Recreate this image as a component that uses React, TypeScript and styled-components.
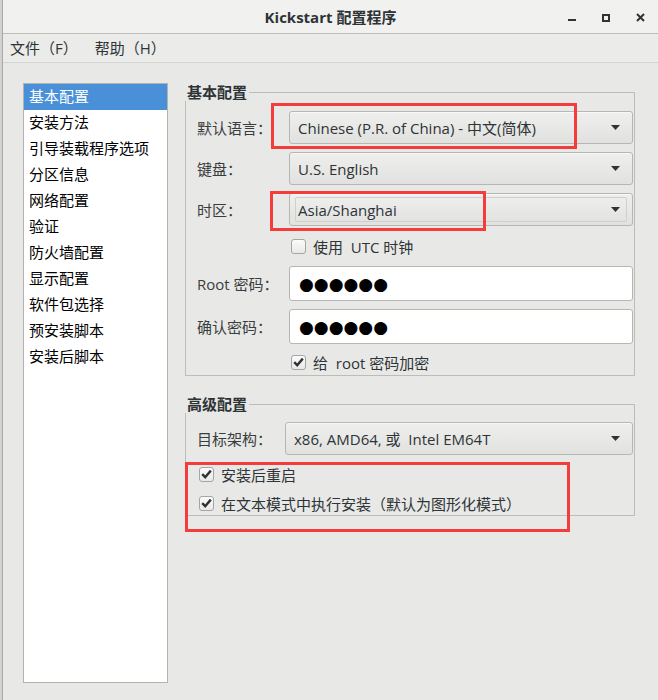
import React from "react";
import styled, { createGlobalStyle } from "styled-components";

const Global = createGlobalStyle`
  html, body { margin: 0; padding: 0; background: #e8e8e7; }
  body {
    font-family: "Open Sans", "Noto Sans CJK SC", sans-serif;
    font-size: 15px;
    color: #2e3436;
  }
  * { box-sizing: border-box; }
`;

const Window = styled.div`
  position: relative;
  width: 658px;
  height: 700px;
  display: flex;
  overflow: hidden;
  background: #e8e8e7;
`;

const Edge = styled.div`
  width: 3px;
  flex: none;
  background: #d2d2d0;
  border-right: 1px solid #a9a9a6;
`;

const Main = styled.div`
  flex: 1;
  display: flex;
  flex-direction: column;
  min-width: 0;
`;

const TitleBar = styled.div`
  height: 34px;
  flex: none;
  display: grid;
  grid-template-columns: 1fr auto 1fr;
  align-items: center;
  background: #f1f1f0;
  border-bottom: 1px solid #bdbdba;
`;

const Title = styled.div`
  grid-column: 2;
  font-weight: 700;
  font-size: 15px;
  color: #2e3436;
  line-height: 20px;
`;

const Controls = styled.div`
  grid-column: 3;
  justify-self: end;
  display: flex;
  align-items: center;
  gap: 26px;
  padding-right: 13px;
  padding-top: 2px;
`;

const MenuBar = styled.div`
  height: 29px;
  flex: none;
  display: flex;
  align-items: center;
  gap: 17px;
  padding-left: 7px;
  background: #ebebea;
  border-bottom: 1px solid #d5d5d3;
`;

const MenuItem = styled.span`
  font-size: 15px;
  line-height: 20px;
  color: #2e3436;
`;

const Content = styled.div`
  flex: 1;
  display: flex;
  align-items: flex-start;
  padding: 20px 0 0 20px;
`;

const NavList = styled.ul`
  list-style: none;
  margin: 0;
  padding: 0;
  width: 145px;
  height: 600px;
  flex: none;
  background: #ffffff;
  border: 1px solid #b3b3b0;
`;

const NavItem = styled.li<{ $active?: boolean }>`
  height: 26px;
  line-height: 25px;
  padding-left: 5px;
  font-size: 15px;
  color: ${(p) => (p.$active ? "#ffffff" : "#000000")};
  background: ${(p) => (p.$active ? "#4a90d9" : "transparent")};
  white-space: nowrap;
`;

const RightColumn = styled.div`
  margin-left: 17px;
  width: 450px;
  display: flex;
  flex-direction: column;
  gap: 19px;
`;

const Frame = styled.fieldset`
  margin: 0;
  padding: 0;
  border: 1px solid #bcbcb9;
  min-width: 0;
`;

const Legend = styled.legend`
  padding: 0 2px 0 2px;
  margin-left: -1px;
  font-weight: 700;
  font-size: 15px;
  line-height: 18px;
  color: #2e3436;
`;

const FormGrid = styled.div<{ $label: number; $gap: number; $top: number; $bottom: number }>`
  display: grid;
  grid-template-columns: ${(p) => p.$label}px 1fr;
  row-gap: ${(p) => p.$gap}px;
  align-items: center;
  padding: ${(p) => p.$top}px 1px ${(p) => p.$bottom}px 11px;
`;

const Label = styled.span`
  font-size: 15px;
  line-height: 20px;
  color: #3a3d3e;
  white-space: nowrap;
`;

const Combo = styled.div`
  height: 33px;
  display: flex;
  align-items: center;
  border: 1px solid #b6b6b3;
  border-radius: 3px;
  background: linear-gradient(#efefee, #e1e1df);
  box-shadow: inset 0 1px #f8f8f8;
  padding: 0 12px 0 8px;
  color: #2e3436;
`;

const ComboText = styled.span`
  flex: 1;
  font-size: 15px;
  line-height: 20px;
  white-space: nowrap;
`;

const FocusBox = styled.div`
  flex: 1;
  align-self: stretch;
  margin: 3px -7px 3px -3px;
  padding: 0 6px 0 2px;
  display: flex;
  align-items: center;
  border: 1px solid #cfcfcc;
  border-radius: 2px;
`;

const Arrow = () => (
  <svg width="9" height="5" viewBox="0 0 9 5">
    <path d="M0 0 H9 L4.5 5 Z" fill="#2e3436" />
  </svg>
);

const Entry = styled.div`
  height: 35px;
  display: flex;
  align-items: center;
  background: #ffffff;
  border: 1px solid #b6b6b3;
  border-radius: 3px;
  padding-left: 9px;
`;

const Dots = styled.span`
  font-family: "DejaVu Sans", sans-serif;
  font-size: 17px;
  line-height: 20px;
  color: #000000;
`;

const CheckRow = styled.label<{ $span?: boolean; $h?: number }>`
  grid-column: ${(p) => (p.$span ? "1 / span 2" : "2")};
  height: ${(p) => p.$h ?? 20}px;
  display: flex;
  align-items: center;
  gap: 7px;
  padding-left: 2px;
  font-size: 15px;
  color: #2e3436;
  white-space: nowrap;
`;

const Box = styled.span`
  width: 15px;
  height: 15px;
  flex: none;
  display: inline-flex;
  align-items: center;
  justify-content: center;
  border: 1px solid #a5a5a2;
  border-radius: 3px;
  background: linear-gradient(#fbfbfb, #e9e9e8);
`;

const Check = ({ checked }: { checked?: boolean }) => (
  <Box>
    {checked && (
      <svg width="11" height="10" viewBox="0 0 11 10">
        <path d="M1.2 5.2 L4.2 8.2 L9.8 1.6" fill="none" stroke="#2e3436" strokeWidth="2.4" />
      </svg>
    )}
  </Box>
);

const Mark = styled.div<{ $x: number; $y: number; $w: number; $h: number }>`
  position: absolute;
  left: ${(p) => p.$x}px;
  top: ${(p) => p.$y}px;
  width: ${(p) => p.$w}px;
  height: ${(p) => p.$h}px;
  border: 3px solid #f43c3c;
  pointer-events: none;
`;

const nav = [
  "基本配置",
  "安装方法",
  "引导装载程序选项",
  "分区信息",
  "网络配置",
  "验证",
  "防火墙配置",
  "显示配置",
  "软件包选择",
  "预安装脚本",
  "安装后脚本",
];

export default function App() {
  return (
    <>
      <Global />
      <Window>
        <Edge />
        <Main>
          <TitleBar>
            <Title>Kickstart 配置程序</Title>
            <Controls>
              <svg width="8" height="8" viewBox="0 0 8 8">
                <rect x="0" y="5" width="8" height="2" fill="#2e3436" />
              </svg>
              <svg width="8" height="8" viewBox="0 0 8 8">
                <rect x="1" y="1" width="6" height="6" fill="none" stroke="#2e3436" strokeWidth="2" />
              </svg>
              <svg width="9" height="9" viewBox="0 0 9 9">
                <path d="M1 1 L8 8 M8 1 L1 8" stroke="#2e3436" strokeWidth="2" />
              </svg>
            </Controls>
          </TitleBar>
          <MenuBar>
            <MenuItem>文件（F）</MenuItem>
            <MenuItem>帮助（H）</MenuItem>
          </MenuBar>
          <Content>
            <NavList>
              {nav.map((n, i) => (
                <NavItem key={n} $active={i === 0}>
                  {n}
                </NavItem>
              ))}
            </NavList>
            <RightColumn>
              <Frame>
                <Legend>基本配置</Legend>
                <FormGrid $label={92} $gap={8} $top={10} $bottom={3}>
                  <Label>默认语言：</Label>
                  <Combo>
                    <ComboText>Chinese (P.R. of China) - 中文(简体)</ComboText>
                    <Arrow />
                  </Combo>
                  <Label>键盘：</Label>
                  <Combo>
                    <ComboText>U.S. English</ComboText>
                    <Arrow />
                  </Combo>
                  <Label>时区：</Label>
                  <Combo>
                    <FocusBox>
                      <ComboText>Asia/Shanghai</ComboText>
                      <Arrow />
                    </FocusBox>
                  </Combo>
                  <CheckRow $h={24}>
                    <Check />
                    <span>使用&nbsp; UTC 时钟</span>
                  </CheckRow>
                  <Label>Root 密码：</Label>
                  <Entry>
                    <Dots>●●●●●●</Dots>
                  </Entry>
                  <Label>确认密码：</Label>
                  <Entry>
                    <Dots>●●●●●●</Dots>
                  </Entry>
                  <CheckRow>
                    <Check checked />
                    <span>给&nbsp; root 密码加密</span>
                  </CheckRow>
                </FormGrid>
              </Frame>
              <Frame>
                <Legend>高级配置</Legend>
                <FormGrid $label={88} $gap={9} $top={9} $bottom={2}>
                  <Label>目标架构：</Label>
                  <Combo>
                    <ComboText>x86, AMD64, 或&nbsp; Intel EM64T</ComboText>
                    <Arrow />
                  </Combo>
                  <CheckRow $span>
                    <Check checked />
                    <span>安装后重启</span>
                  </CheckRow>
                  <CheckRow $span>
                    <Check checked />
                    <span>在文本模式中执行安装（默认为图形化模式）</span>
                  </CheckRow>
                </FormGrid>
              </Frame>
            </RightColumn>
          </Content>
        </Main>
        <Mark $x={271} $y={103} $w={306} $h={46} />
        <Mark $x={270} $y={191} $w={216} $h={40} />
        <Mark $x={185} $y={462} $w={385} $h={70} />
      </Window>
    </>
  );
}
